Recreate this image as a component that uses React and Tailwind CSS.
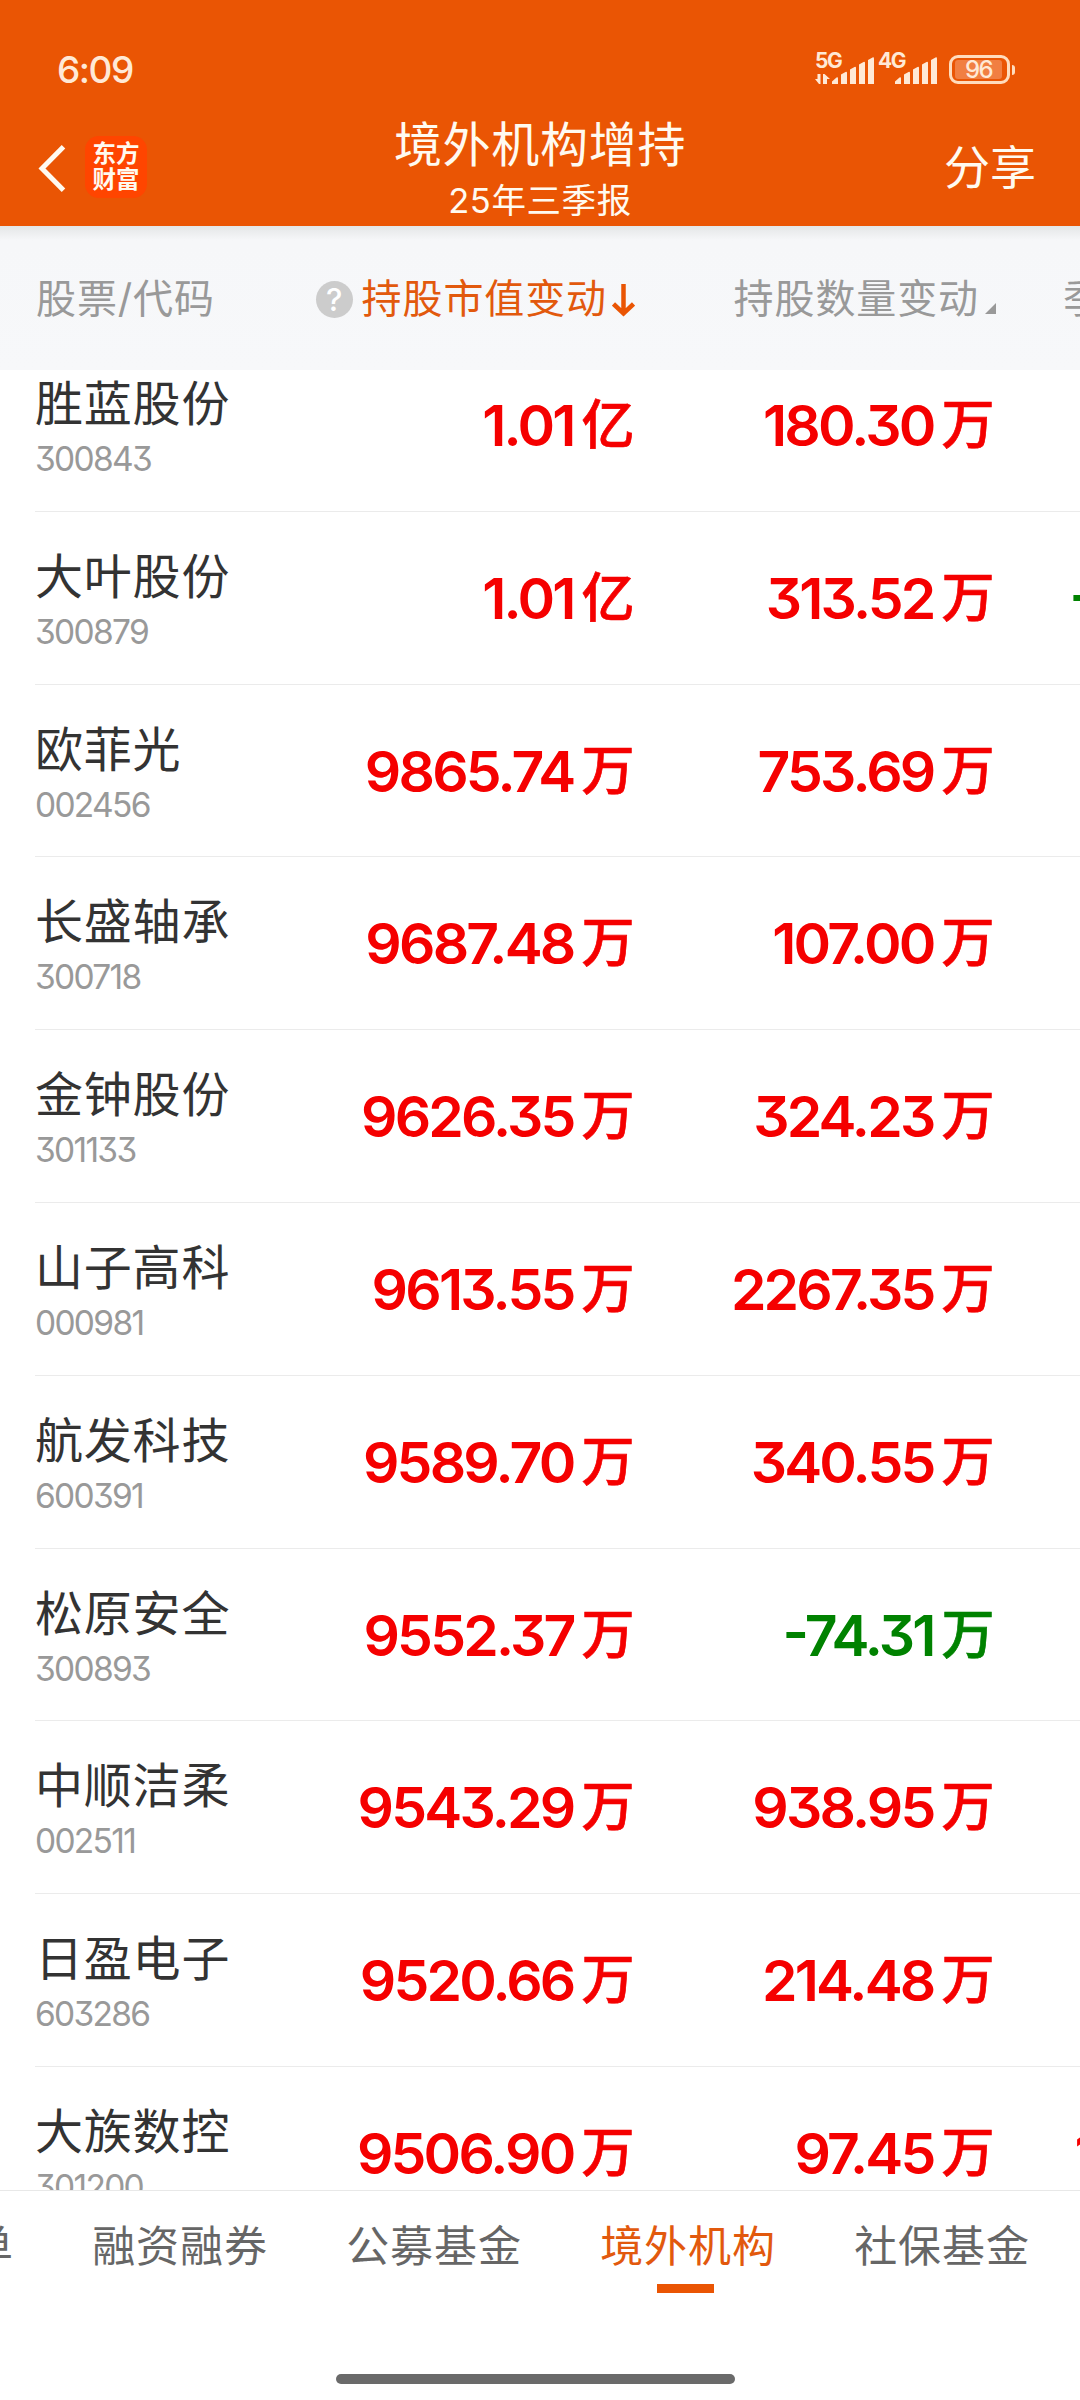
const stocks = [
  { name: "胜蓝股份", code: "300843", value: "1.01", unit: "亿", amount: "180.30", next: "" },
  { name: "大叶股份", code: "300879", value: "1.01", unit: "亿", amount: "313.52", next: "-" },
  { name: "欧菲光", code: "002456", value: "9865.74", unit: "万", amount: "753.69", next: "" },
  { name: "长盛轴承", code: "300718", value: "9687.48", unit: "万", amount: "107.00", next: "" },
  { name: "金钟股份", code: "301133", value: "9626.35", unit: "万", amount: "324.23", next: "" },
  { name: "山子高科", code: "000981", value: "9613.55", unit: "万", amount: "2267.35", next: "" },
  { name: "航发科技", code: "600391", value: "9589.70", unit: "万", amount: "340.55", next: "" },
  { name: "松原安全", code: "300893", value: "9552.37", unit: "万", amount: "-74.31", next: "" },
  { name: "中顺洁柔", code: "002511", value: "9543.29", unit: "万", amount: "938.95", next: "" },
  { name: "日盈电子", code: "603286", value: "9520.66", unit: "万", amount: "214.48", next: "" },
  { name: "大族数控", code: "301200", value: "9506.90", unit: "万", amount: "97.45", next: "1" },
];

const tabs = ["龙虎榜单", "融资融券", "公募基金", "境外机构", "社保基金"];

function Signal() {
  return (
    <svg className="block h-[27px] w-[42px]" viewBox="0 0 42 27" fill="currentColor">
      <path d="M0 27v-2.500l4.500-4q1.500-.8 1.500.8V27z" />
      <path d="M9 27V17.500l4.500-2.500q1.500-.6 1.500 1v11z" />
      <path d="M18 27V12.500l4.500-2.500q1.500-.6 1.500 1v16z" />
      <path d="M27 27V7.500l4.500-2.500q1.500-.6 1.500 1v21z" />
      <path d="M36 27V3l4.500-2.500q1.500-.6 1.500 1V27z" />
    </svg>
  );
}

function StatusBar() {
  return (
    <div className="flex h-[112px] items-start justify-between pl-[57px] pr-[65px] text-[#ffe9d6]">
      <span className="mt-[50px] text-[37px] font-medium leading-10 tracking-[-1.5px]">6:09</span>

      <div className="mt-[50px] flex h-9 items-start">
        <div className="relative h-9 w-[59px]">
          <span className="absolute left-0 top-[1px] text-[21px] font-bold leading-5 tracking-[-1.500px]">5G</span>
          <svg className="absolute left-0 top-[24px] h-[10px] w-[15px]" viewBox="0 0 15 10" fill="currentColor">
            <path d="M0 5h2.500V0H5.500v10H4zM8 0h1.500l5.500 5h-3v5H8z" />
          </svg>
          <div className="absolute left-[17px] top-[7px]">
            <Signal />
          </div>
        </div>
        <div className="relative ml-1 h-9 w-[59px]">
          <span className="absolute left-0 top-[1px] text-[21px] font-bold leading-5 tracking-[-1.500px]">4G</span>
          <div className="absolute left-[17px] top-[7px]">
            <Signal />
          </div>
        </div>
        <div className="ml-3 mt-[5px] flex items-center">
          <div className="flex h-[29px] w-[61px] items-center rounded-[9px] border-3 border-[#ffdcbd] p-[3px]">
            <div className="flex h-[19px] w-[47px] items-center justify-center rounded-[3px] bg-[#f17f42] text-[24px] font-medium leading-none tracking-[-1.5px]">
              96
            </div>
          </div>
          <div className="ml-[1.500px] h-[10px] w-[3.500px] rounded-r-full bg-[#ffdcbd]" />
        </div>
      </div>
    </div>
  );
}

function NavBar() {
  return (
    <div className="flex h-[114px] justify-between text-[#fffaf0]">
      <div className="flex w-[300px] items-start pl-[38px] pt-6">
        <svg className="mt-[9px] h-[47px] w-[28px]" viewBox="0 0 28 47" fill="none" stroke="currentColor" strokeWidth="5">
          <path d="M25.500 1.800 4 23.500l21.500 21.700" />
        </svg>
        <div className="ml-[19px] grid h-[62px] w-[62px] place-content-center rounded-[14px] bg-[#ff4500] text-center text-[23.5px] font-bold leading-[26px]">
          <span>东方</span>
          <span>财富</span>
        </div>
      </div>
      <div className="flex flex-col items-center">
        <h1 className="mt-1 text-[48px] leading-[58px] tracking-[0.7px]">境外机构增持</h1>
        <p className="mt-[7px] text-[34.500px] leading-[40px] tracking-[0.6px]">25年三季报</p>
      </div>
      <div className="flex w-[300px] justify-end pr-[44px] pt-[26px] text-[46px] leading-[58px]">分享</div>
    </div>
  );
}

function TableHead() {
  return (
    <div className="flex h-[144px] items-start overflow-hidden bg-gradient-to-b from-[#e4e6e7] via-[#f6f7f9] via-10% to-[#f7f8fa] pt-[49px] text-[40px] leading-[48px] tracking-[0.9px] text-[#999]">
      <div className="w-[300px] shrink-0 pl-[36px]">股票/代码</div>
      <div className="flex w-[335px] shrink-0 items-center justify-end text-[#e2590d]">
        <span className="mr-[9px] flex h-[37px] w-[37px] items-center justify-center rounded-full bg-[#ccc] text-[31px] font-medium leading-none tracking-normal text-white">
          ?
        </span>
        持股市值变动
        <svg className="ml-[5px] mt-[2px] h-[33px] w-[23px]" viewBox="0 0 23 33" fill="none" stroke="#ea5504" strokeWidth="4.500">
          <path d="M11.500 0v29M1.500 20l10 9.500 10-9.500" />
        </svg>
      </div>
      <div className="flex w-[361px] shrink-0 items-center justify-end">
        持股数量变动
        <svg className="ml-[6px] mt-[19px] h-[11px] w-[11px]" viewBox="0 0 11 11" fill="#999">
          <path d="M11 0v11H0z" />
        </svg>
      </div>
      <div className="ml-[67px] shrink-0 whitespace-nowrap">季度涨跌幅</div>
    </div>
  );
}

function Amount({ text, unit }) {
  const negative = text.startsWith("-");
  return (
    <div className={`flex shrink-0 items-baseline justify-end ${negative ? "text-[#008200]" : "text-[#f50000]"}`}>
      <span className="text-[57px] font-semibold leading-[70px] tracking-[-2.800px]">
        {negative && <span className="relative -top-1">-</span>}
        {negative ? text.slice(1) : text}
      </span>
      <span className="relative -top-[2px] ml-[8px] text-[53px] font-medium leading-[70px] [-webkit-text-stroke:0.7px]">
        {unit}
      </span>
    </div>
  );
}

function StockRow({ stock }) {
  return (
    <div className="ml-[35px] flex h-[172.8px] border-b-[1.500px] border-[#ebebeb]">
      <div className="w-[240px] shrink-0 pt-[36px]">
        <div className="text-[48px] leading-[58px] tracking-[0.8px] text-[#333]">{stock.name}</div>
        <div className="mt-[6px] text-[33.500px] leading-[40px] tracking-[-1.7px] text-[#999]">{stock.code}</div>
      </div>
      <div className="w-[359.500px] shrink-0 pt-[52px]">
        <Amount text={stock.value} unit={stock.unit} />
      </div>
      <div className="w-[360px] shrink-0 pt-[52px]">
        <Amount text={stock.amount} unit="万" />
      </div>
      {stock.next && (
        <div className={stock.next === "-" ? "ml-[75px] pt-[52px]" : "ml-[80px] pt-[52px]"}>
          <Amount text={stock.next} unit="" />
        </div>
      )}
    </div>
  );
}

export default function App() {
  return (
    <div className="flex h-[2400px] w-[1080px] flex-col overflow-hidden bg-white font-['Inter','Noto_Sans_CJK_SC',sans-serif] [font-feature-settings:'cv09']">
      <header className="bg-[#ea5504]">
        <StatusBar />
        <NavBar />
      </header>

      <TableHead />

      <main className="h-[1820px] overflow-hidden">
        <div className="-mt-[31px]">
          {stocks.map((stock) => (
            <StockRow key={stock.code} stock={stock} />
          ))}
        </div>
      </main>

      <footer className="flex h-[210px] flex-col items-center justify-between border-t border-[#e8e8e8] bg-white pb-4">
        <nav className="flex w-full justify-end pr-[11px] pt-[29px]">
          {tabs.map((tab) => (
            <div
              key={tab}
              className={`flex w-[254px] shrink-0 flex-col items-center text-[43px] leading-[52px] tracking-[0.9px] ${
                tab === "境外机构" ? "text-[#e2590d]" : "text-[#666]"
              }`}
            >
              {tab}
              {tab === "境外机构" && <span className="mr-[6px] mt-[12px] h-[9px] w-[57px] bg-[#ea5504]" />}
            </div>
          ))}
        </nav>
        <div className="mr-[9px] h-[10px] w-[399px] rounded-full bg-[#6a6a6a]" />
      </footer>
    </div>
  );
}
